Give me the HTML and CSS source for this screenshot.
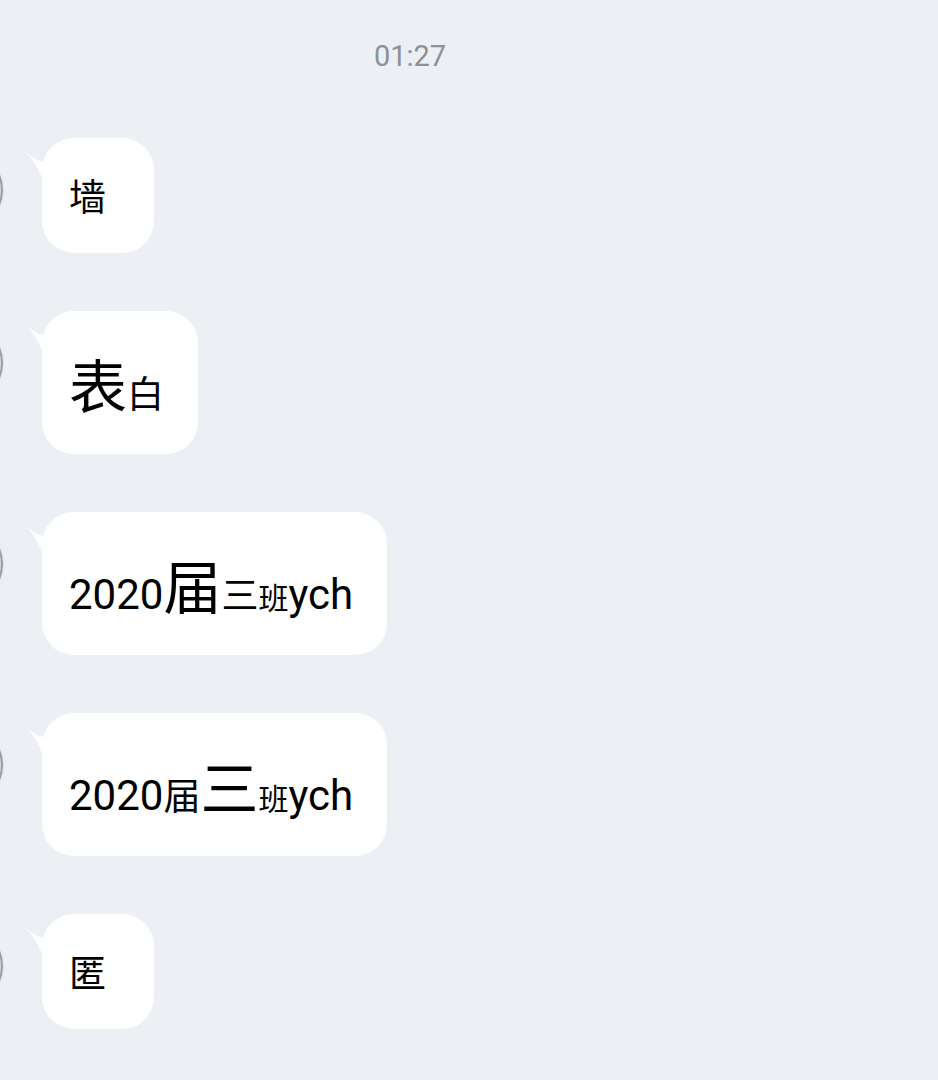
FILE: index.html
```html
<!DOCTYPE html>
<html lang="zh">
<head>
<meta charset="utf-8">
<title>Chat</title>
<link rel="stylesheet" href="styles.css">
</head>
<body>
<div class="chat">
  <div class="time">01:27</div>
  <div class="msgs">
    <div class="row">
      <div class="avatar"></div>
      <div class="bubble"><svg class="tail" viewBox="0 0 24 32" width="24" height="32"><path d="M1,5 Q9,12 17,14 L24,14 L24,32 L17,32 Q11,16 1,5 Z"/></svg><span class="cjk">墙</span></div>
    </div>
    <div class="row">
      <div class="avatar"></div>
      <div class="bubble"><svg class="tail" viewBox="0 0 24 32" width="24" height="32"><path d="M1,5 Q9,12 17,14 L24,14 L24,32 L17,32 Q11,16 1,5 Z"/></svg><span class="cjk lg">表</span><span class="cjk">白</span></div>
    </div>
    <div class="row">
      <div class="avatar"></div>
      <div class="bubble"><svg class="tail" viewBox="0 0 24 32" width="24" height="32"><path d="M1,5 Q9,12 17,14 L24,14 L24,32 L17,32 Q11,16 1,5 Z"/></svg><span class="lat">2020</span><span class="cjk lg">届</span><span class="cjk">三</span><span class="cjk sm">班</span><span class="lat">ych</span></div>
    </div>
    <div class="row">
      <div class="avatar"></div>
      <div class="bubble"><svg class="tail" viewBox="0 0 24 32" width="24" height="32"><path d="M1,5 Q9,12 17,14 L24,14 L24,32 L17,32 Q11,16 1,5 Z"/></svg><span class="lat">2020</span><span class="cjk">届</span><span class="cjk lg">三</span><span class="cjk sm">班</span><span class="lat">ych</span></div>
    </div>
    <div class="row">
      <div class="avatar"></div>
      <div class="bubble"><svg class="tail" viewBox="0 0 24 32" width="24" height="32"><path d="M1,5 Q9,12 17,14 L24,14 L24,32 L17,32 Q11,16 1,5 Z"/></svg><span class="cjk">匿</span></div>
    </div>
  </div>
</div>
</body>
</html>
```

FILE: styles.css
```css
html, body {
  margin: 0;
  padding: 0;
  background: #ecf0f4;
}

.chat {
  width: 938px;
  height: 1080px;
  overflow: hidden;
  background: #ecf0f4;
}

.time {
  width: 820px;
  padding-top: 39px;
  text-align: center;
  font-family: Roboto, "Noto Sans", sans-serif;
  font-size: 29px;
  color: #8d9196;
}

.msgs {
  margin-top: 65px;
  display: flex;
  flex-direction: column;
  gap: 58px;
}

.row {
  display: flex;
  align-items: flex-start;
}

.avatar {
  flex-shrink: 0;
  width: 78px;
  height: 78px;
  box-sizing: border-box;
  margin-left: -75px;
  margin-top: 13px;
  border-radius: 50%;
  background: #d6d9dc;
  border: 2px solid #9a9da0;
  box-shadow: 0 0 3px rgba(0, 0, 0, 0.1);
}

.bubble {
  position: relative;
  margin-left: 39px;
  box-sizing: border-box;
  min-width: 112px;
  min-height: 115px;
  padding: 30px 34px 29px 27px;
  background: #ffffff;
  border-radius: 32px;
  font-family: "Noto Sans CJK SC", "Noto Sans CJK JP", sans-serif;
  font-size: 37px;
  color: #000000;
  white-space: nowrap;
}

.tail {
  position: absolute;
  left: -16px;
  top: 10px;
  fill: #ffffff;
}

.cjk {
  font-family: "Noto Sans CJK SC", "Noto Sans CJK JP", sans-serif;
  font-size: 37px;
}

.cjk.lg {
  font-size: 58px;
}

.cjk.sm {
  font-size: 30px;
}

.lat {
  font-family: Roboto, "Noto Sans", sans-serif;
  font-size: 42px;
}
```
